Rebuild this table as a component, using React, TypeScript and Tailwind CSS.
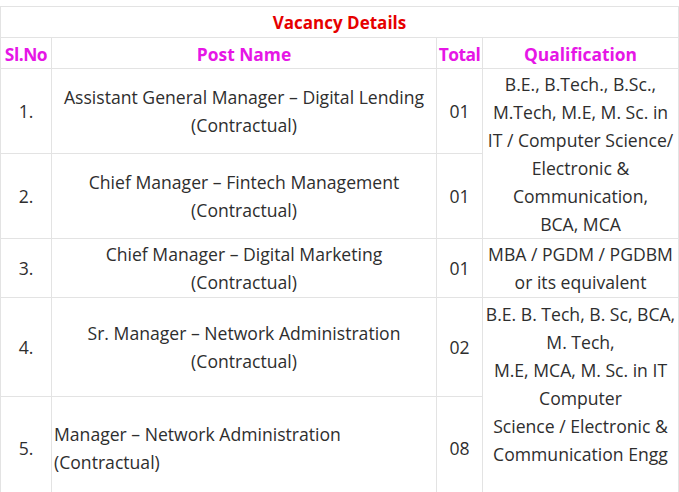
import React from "react";

const cell = "border border-[#e3e3e3] text-center align-middle p-0";

export default function App() {
  return (
    <div
      className="bg-white w-[679px] h-[492px] overflow-hidden pt-[6px] text-[#2e2e2e] text-[17.6px] leading-[28px]"
      style={{ fontFamily: '"Open Sans", "Noto Sans", sans-serif' }}
    >
      <table className="border-collapse table-fixed w-[678px]">
        <colgroup>
          <col className="w-[51px]" />
          <col className="w-[385px]" />
          <col className="w-[46px]" />
          <col className="w-[196px]" />
        </colgroup>
        <tbody>
          <tr className="h-[31px]">
            <td colSpan={4} className={`${cell} font-bold text-[#e60000] text-[17px] pt-[1px]`}>
              Vacancy Details
            </td>
          </tr>
          <tr className="h-[31px] font-bold text-[#e616e6] text-[17.4px]">
            <td className={`${cell} whitespace-nowrap tracking-[-0.5px] pt-[2px]`}>Sl.No</td>
            <td className={`${cell} pt-[2px]`}>Post Name</td>
            <td className={`${cell} whitespace-nowrap tracking-[-0.5px] pt-[2px]`}>Total</td>
            <td className={`${cell} pt-[2px]`}>Qualification</td>
          </tr>
          <tr className="h-[85px]">
            <td className={cell}>1.</td>
            <td className={cell}>
              Assistant General Manager – Digital Lending
              <br />
              (Contractual)
            </td>
            <td className={cell}>01</td>
            <td className={`${cell} whitespace-nowrap`} rowSpan={2}>
              B.E., B.Tech., B.Sc.,
              <br />
              M.Tech, M.E, M. Sc. in
              <br />
              IT / Computer Science/
              <br />
              Electronic &amp;
              <br />
              Communication,
              <br />
              BCA, MCA
            </td>
          </tr>
          <tr className="h-[85px]">
            <td className={cell}>2.</td>
            <td className={cell}>
              Chief Manager – Fintech Management
              <br />
              (Contractual)
            </td>
            <td className={cell}>01</td>
          </tr>
          <tr className="h-[59px]">
            <td className={cell}>3.</td>
            <td className={cell}>
              Chief Manager – Digital Marketing
              <br />
              (Contractual)
            </td>
            <td className={cell}>01</td>
            <td className={`${cell} whitespace-nowrap`}>
              MBA / PGDM / PGDBM
              <br />
              or its equivalent
            </td>
          </tr>
          <tr className="h-[99px]">
            <td className={cell}>4.</td>
            <td className={cell}>
              Sr. Manager – Network Administration
              <br />
              (Contractual)
            </td>
            <td className={cell}>02</td>
            <td className={`${cell} whitespace-nowrap`} rowSpan={2}>
              B.E. B. Tech, B. Sc, BCA,
              <br />
              M. Tech,
              <br />
              M.E, MCA, M. Sc. in IT
              <br />
              Computer
              <br />
              Science / Electronic &amp;
              <br />
              Communication Engg
              <br />
              &nbsp;
            </td>
          </tr>
          <tr className="h-[102px]">
            <td className={cell}>5.</td>
            <td className={`${cell} !text-left pl-[2px]`}>
              Manager – Network Administration
              <br />
              (Contractual)
            </td>
            <td className={cell}>08</td>
          </tr>
        </tbody>
      </table>
    </div>
  );
}
